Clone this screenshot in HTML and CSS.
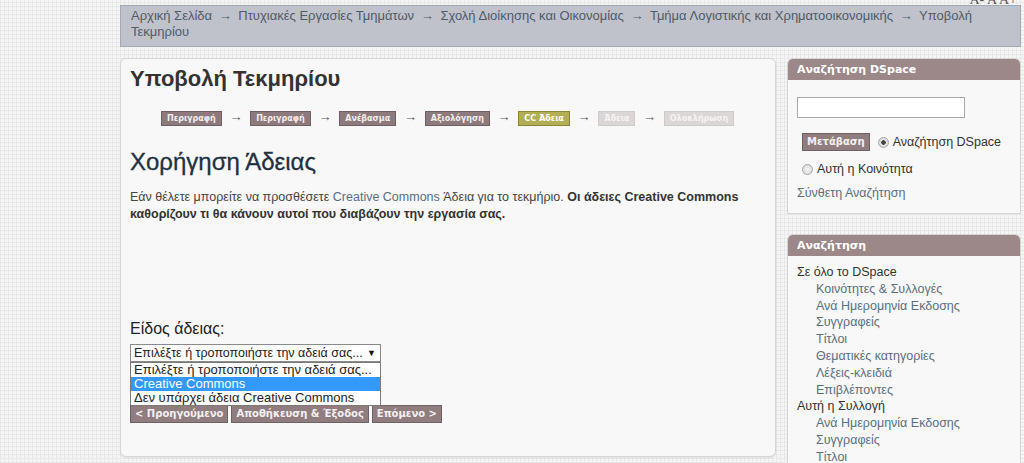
FILE: index.html
```html
<!DOCTYPE html>
<html lang="el">
<head>
    <meta charset="UTF-8">
    <title>Υποβολή Τεκμηρίου</title>
    <link rel="stylesheet" href="styles.css">
</head>
<body>
    <div class="page">
        <div class="font-size"><span>A- A A+</span></div>

        <div class="breadcrumb">
            <a href="#">Αρχική Σελίδα</a> <span class="sep">→</span>
            <a href="#">Πτυχιακές Εργασίες Τμημάτων</a> <span class="sep">→</span>
            <a href="#">Σχολή Διοίκησης και Οικονομίας</a> <span class="sep">→</span>
            <a href="#">Τμήμα Λογιστικής και Χρηματοοικονομικής</a> <span class="sep">→</span>
            Υποβολή Τεκμηρίου
        </div>

        <div class="columns">
            <div class="main">
                <h1>Υποβολή Τεκμηρίου</h1>

                <div class="steps">
                    <span class="step done">Περιγραφή</span><span class="arrow">→</span>
                    <span class="step done">Περιγραφή</span><span class="arrow">→</span>
                    <span class="step done">Ανέβασμα</span><span class="arrow">→</span>
                    <span class="step done">Αξιολόγηση</span><span class="arrow">→</span>
                    <span class="step current">CC Άδεια</span><span class="arrow">→</span>
                    <span class="step todo">Άδεια</span><span class="arrow">→</span>
                    <span class="step todo">Ολοκλήρωση</span>
                </div>

                <h2>Χορήγηση Άδειας</h2>
                <p class="intro">Εάν θέλετε μπορείτε να προσθέσετε <a href="#">Creative Commons</a> Άδεια για το τεκμήριο. <b>Οι άδειες Creative Commons καθορίζουν τι θα κάνουν αυτοί που διαβάζουν την εργασία σας.</b></p>

                <label class="field-label">Είδος άδειας:</label>
                <div class="select-wrap">
                    <div class="select">
                        <span>Επιλέξτε ή τροποποιήστε την αδειά σας...</span>
                        <span class="caret">▼</span>
                    </div>
                    <ul class="options">
                        <li>Επιλέξτε ή τροποποιήστε την αδειά σας...</li>
                        <li class="selected">Creative Commons</li>
                        <li>Δεν υπάρχει άδεια Creative Commons</li>
                    </ul>
                </div>

                <div class="buttons">
                    <a class="button" href="#">&lt; Προηγούμενο</a>
                    <a class="button" href="#">Αποθήκευση &amp; Έξοδος</a>
                    <a class="button" href="#">Επόμενο &gt;</a>
                </div>
            </div>

            <div class="sidebar">
                <div class="box search-box">
                    <h3>Αναζήτηση DSpace</h3>
                    <div class="box-body">
                        <div class="text-input"></div>
                        <div class="search-row">
                            <a class="button go" href="#">Μετάβαση</a>
                            <span class="radio checked"></span> Αναζήτηση DSpace
                        </div>
                        <div class="search-row second">
                            <span class="radio"></span> Αυτή η Κοινότητα
                        </div>
                        <a class="advanced" href="#">Σύνθετη Αναζήτηση</a>
                    </div>
                </div>

                <div class="box browse-box">
                    <h3>Αναζήτηση</h3>
                    <div class="box-body">
                        <ul class="browse">
                            <li class="group">Σε όλο το DSpace</li>
                            <li><a href="#">Κοινότητες &amp; Συλλογές</a></li>
                            <li><a href="#">Ανά Ημερομηνία Εκδοσης</a></li>
                            <li><a href="#">Συγγραφείς</a></li>
                            <li><a href="#">Τίτλοι</a></li>
                            <li><a href="#">Θεματικές κατηγορίες</a></li>
                            <li><a href="#">Λέξεις-κλειδιά</a></li>
                            <li><a href="#">Επιβλέποντες</a></li>
                            <li class="group">Αυτή η Συλλογή</li>
                            <li><a href="#">Ανά Ημερομηνία Εκδοσης</a></li>
                            <li><a href="#">Συγγραφείς</a></li>
                            <li><a href="#">Τίτλοι</a></li>
                        </ul>
                    </div>
                </div>
            </div>
        </div>
    </div>
</body>
</html>
```

FILE: styles.css
```css
html, body {
    height: 100%;
}

body {
    margin: 0;
    font-family: 'Liberation Sans', Arial, sans-serif;
    color: #333;
    background-color: #f5f5f5;
    background-image:
        repeating-linear-gradient(0deg, #e8e8e8 0, #e8e8e8 1px, transparent 1px, transparent 4px),
        repeating-linear-gradient(90deg, #e8e8e8 0, #e8e8e8 1px, transparent 1px, transparent 4px);
    overflow: hidden;
}

a {
    text-decoration: none;
}

.page {
    margin-left: 120px;
    width: 901px;
}

.font-size {
    height: 5px;
    overflow: hidden;
    text-align: right;
    font-family: 'Liberation Serif', serif;
    font-size: 14px;
    color: #555;
}

.font-size span {
    display: block;
    line-height: 14px;
    margin-top: -7px;
    padding-right: 4px;
}

.breadcrumb {
    background-color: #bfc1cb;
    border: 1px solid #a5a8b2;
    padding: 2px 10px 3px;
    height: 35px;
    font-size: 13px;
    line-height: 16px;
    color: #4f5b67;
}

.breadcrumb a {
    color: #4f5b67;
}

.breadcrumb .sep {
    margin: 0 3px;
}

.columns {
    display: flex;
    align-items: flex-start;
    gap: 11px;
    margin-top: 11px;
}

.main {
    width: 636px;
    background-color: #f8f8f8;
    border: 1px solid #d6d6d6;
    border-radius: 6px;
    box-shadow: 0 1px 2px rgba(0, 0, 0, 0.08);
    padding: 7px 9px 33px;
}

.main h1 {
    margin: 0;
    font-size: 22px;
    line-height: 26px;
    color: #333;
}

.steps {
    display: flex;
    align-items: center;
    margin: 18px 0 0 31px;
    height: 16px;
}

.step {
    font-family: 'DejaVu Sans', Verdana, sans-serif;
    font-size: 8px;
    font-weight: bold;
    line-height: 13px;
    padding: 0 5px;
    border: 1px solid;
}

.step.done {
    background-color: #8d7a7d;
    border-color: #6f5f62;
    color: #f3eded;
}

.step.current {
    background-color: #b2ae55;
    border-color: #8a8733;
    color: #fff;
}

.step.todo {
    background-color: #dbd7d7;
    border-color: #cfcaca;
    color: #f5f3f3;
}

.arrow {
    width: 28.5px;
    text-align: center;
    font-size: 13px;
    line-height: 13px;
    padding-bottom: 4px;
    color: #555;
}

.main h2 {
    margin: 22px 0 0;
    font-size: 24px;
    font-weight: normal;
    line-height: 28px;
    color: #22313f;
    -webkit-text-stroke: 0.3px #22313f;
}

.intro {
    margin: 13px 0 0;
    font-size: 12.5px;
    line-height: 17px;
    color: #444;
}

.intro a {
    color: #5a6f7f;
}

.intro b {
    color: #333;
}

.field-label {
    display: block;
    margin-top: 97px;
    font-size: 16px;
    line-height: 18px;
    color: #222;
}

.select-wrap {
    position: relative;
    margin-top: 6px;
    width: 251px;
}

.select {
    display: flex;
    justify-content: space-between;
    align-items: center;
    height: 16px;
    border: 1px solid #8a8a8a;
    background-color: #fff;
    padding: 0 4px 0 3px;
    font-size: 12.5px;
    white-space: nowrap;
    color: #222;
}

.caret {
    font-size: 9px;
    color: #111;
}

.options {
    position: absolute;
    top: 18px;
    left: 0;
    width: 249px;
    margin: 0;
    padding: 0;
    list-style: none;
    background-color: #fff;
    border: 1px solid #7a7a7a;
    font-size: 13px;
    line-height: 14px;
    white-space: nowrap;
    color: #222;
}

.options li {
    padding: 0 3px;
}

.options li.selected {
    background-color: #3399ff;
    color: #fff;
}

.buttons {
    display: flex;
    gap: 3px;
    margin-top: 43px;
}

.button {
    display: inline-block;
    font-family: 'DejaVu Sans', Verdana, sans-serif;
    font-size: 10px;
    font-weight: bold;
    line-height: 16px;
    padding: 0 4px;
    background-color: #8f7d80;
    border: 1px solid #6f6063;
    color: #f5f0f0;
}

.sidebar {
    width: 234px;
}

.box {
    border: 1px solid #d4d4d4;
    border-radius: 6px 6px 0 0;
    background-color: #f8f8f8;
}

.box h3 {
    margin: 0;
    height: 21px;
    padding-left: 9px;
    border-radius: 5px 5px 0 0;
    background-color: #9c8789;
    font-family: 'DejaVu Sans', Verdana, sans-serif;
    font-size: 11px;
    line-height: 21px;
    color: #fff;
}

.box-body {
    padding: 0 9px;
}

.search-box .box-body {
    height: 116px;
    padding-top: 17px;
}

.text-input {
    width: 166px;
    height: 19px;
    border: 1px solid #a9a9a9;
    background-color: #fff;
}

.search-row {
    display: flex;
    align-items: center;
    margin-top: 15px;
    font-size: 12.5px;
    color: #333;
}

.search-row.second {
    margin: 11px 0 0 5px;
}

.button.go {
    margin: 0 8px 0 5px;
}

.radio {
    display: inline-block;
    width: 9px;
    height: 9px;
    margin-right: 4px;
    border: 1px solid #a6a6a6;
    border-radius: 50%;
    background: radial-gradient(circle, #f4f4f4 0, #d6d6d6 100%);
}

.radio.checked {
    background: radial-gradient(circle, #444 0, #444 2px, #e6e6e6 2.5px, #d0d0d0 100%);
}

.advanced {
    display: block;
    margin-top: 10px;
    font-size: 12.5px;
    color: #5a6f7f;
}

.browse-box {
    margin-top: 20px;
    height: 300px;
}

.browse {
    list-style: none;
    margin: 0;
    padding: 8px 0 0;
    font-size: 12.5px;
    line-height: 16.8px;
}

.browse li {
    padding-left: 19px;
}

.browse li.group {
    padding-left: 0;
    color: #333;
}

.browse a {
    color: #5a6f7f;
}
```
